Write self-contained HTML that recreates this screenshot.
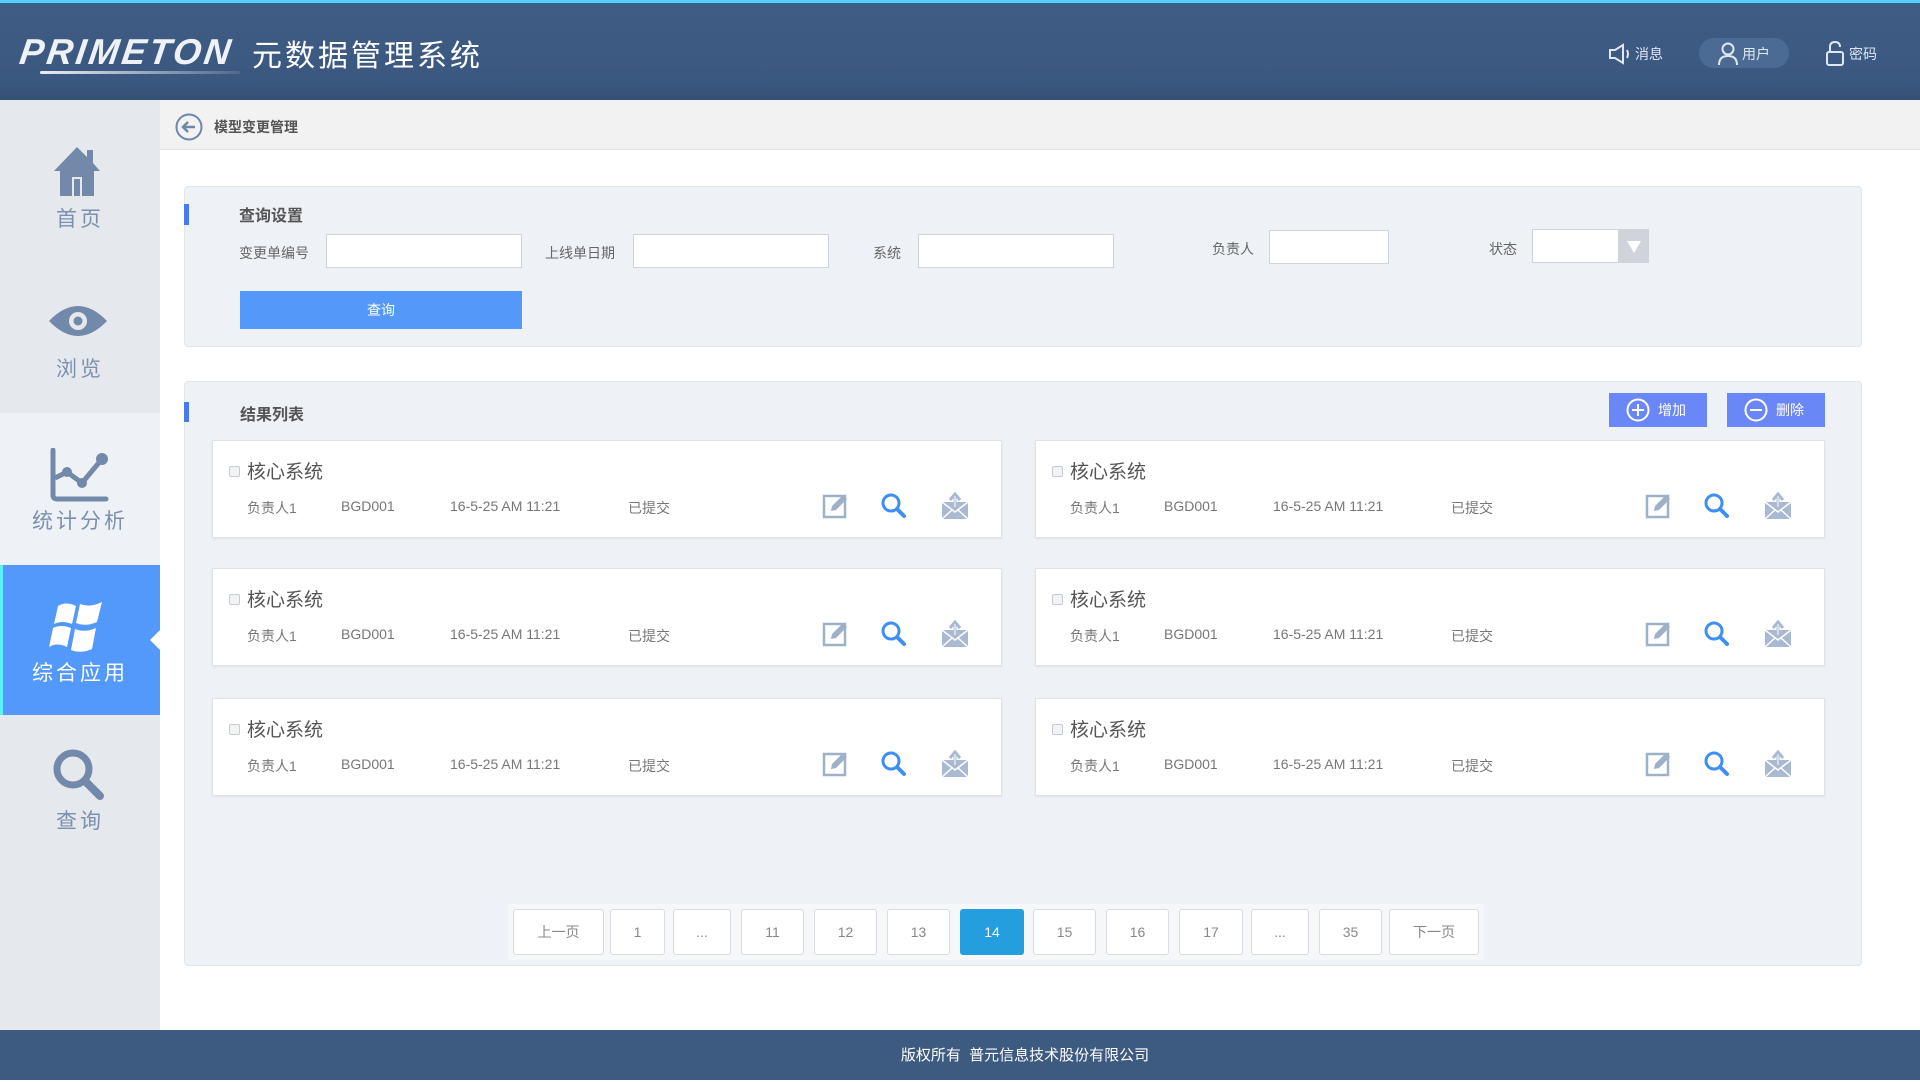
<!DOCTYPE html>
<html><head><meta charset="utf-8"><style>
*{margin:0;padding:0;box-sizing:border-box}
body{width:1920px;height:1080px;position:relative;overflow:hidden;background:#fff;font-family:"Liberation Sans","Noto Sans CJK SC",sans-serif;color:#555}
.a{position:absolute}
.hdr{left:0;top:0;width:1920px;height:100px;background:linear-gradient(#3f5c85,#3b5880 80%,#344f74);border-top:3px solid #52d2f6}
.side{left:0;top:100px;width:160px;height:930px;background:#e5e9ee}
.nav{left:0;width:160px;text-align:center;color:#7a90ae;font-size:21px;letter-spacing:3px}
.crumb{left:160px;top:100px;width:1760px;height:50px;background:#f2f2f2;border-bottom:1px solid #e3e3e3}
.panel{left:184px;width:1678px;background:#eef1f5;border:1px solid #e2e5e9;border-radius:4px}
.mark{left:184px;width:5px;background:#4a78f0}
.lbl{font-size:14px;color:#666;line-height:20px}
.inp{background:#fff;border:1px solid #cfd4da}
.card{width:790px;height:98px;background:#fff;border:1px solid #dfe2e7;box-shadow:0 1px 2px rgba(0,0,0,.06)}
.card .cb{left:16px;top:25px;width:11px;height:11px;border:1px solid #c8ccd2;background:#f2f3f5;border-radius:2px}
.card .t{left:34px;top:16px;font-size:19px;color:#555}
.card .r{top:57px;font-size:14px;color:#777}
.pg{top:909px;height:46px;background:#fff;border:1px solid #d8dce2;border-radius:3px;text-align:center;line-height:44px;font-size:14px;color:#888}
.btn2{top:393px;width:98px;height:34px;background:#6a87f7;color:#fff;font-size:14px;line-height:34px}
</style></head><body>
<div class="a hdr">
 <div class="a" style="left:20px;top:28px;font:italic bold 36px 'Liberation Sans',sans-serif;color:#eef2f7;letter-spacing:3px;transform:skewX(-8deg)">PRIMETON</div>
 <div class="a" style="left:40px;top:68px;width:200px;height:3px;border-radius:2px;background:linear-gradient(90deg,rgba(255,255,255,.9),rgba(255,255,255,.1))"></div>
 <div class="a" style="left:252px;top:28px;font-size:30px;color:#fff;letter-spacing:3px">元数据管理系统</div>
 <svg class="a" style="left:1608px;top:40px" width="24" height="22" viewBox="0 0 24 22"><path d="M2 7h5l8-5v18l-8-5H2z" fill="none" stroke="#dfe7f2" stroke-width="2"/><path d="M19 7q2 4 0 8" fill="none" stroke="#dfe7f2" stroke-width="2"/></svg>
 <div class="a" style="left:1635px;top:41px;font-size:14px;color:#dfe7f2">消息</div>
 <div class="a" style="left:1699px;top:35px;width:90px;height:30px;border-radius:15px;background:#4b6b95"></div>
 <svg class="a" style="left:1717px;top:39px" width="22" height="24" viewBox="0 0 22 24"><circle cx="11" cy="7" r="5.5" fill="none" stroke="#dfe7f2" stroke-width="2"/><path d="M2 23q0-9 9-9t9 9" fill="none" stroke="#dfe7f2" stroke-width="2"/></svg>
 <div class="a" style="left:1742px;top:41px;font-size:14px;color:#dfe7f2">用户</div>
 <svg class="a" style="left:1825px;top:38px" width="20" height="26" viewBox="0 0 20 26"><rect x="2" y="11" width="16" height="13" rx="2" fill="none" stroke="#dfe7f2" stroke-width="2"/><path d="M5 11V6q0-5 5-5t5 5" fill="none" stroke="#dfe7f2" stroke-width="2"/></svg>
 <div class="a" style="left:1849px;top:41px;font-size:14px;color:#dfe7f2">密码</div>
</div>

<div class="a side"></div>
<div class="a" style="left:0;top:413px;width:160px;height:152px;background:#eef2f6"></div>
<div class="a" style="left:0;top:565px;width:160px;height:150px;background:#5299fb;border-left:3px solid #5ff0f5"></div>
<div class="a" style="left:150px;top:630px;width:0;height:0;border-top:10px solid transparent;border-bottom:10px solid transparent;border-right:10px solid #fff"></div>

<svg class="a" style="left:52px;top:145px" width="50" height="52" viewBox="0 0 50 52"><path d="M25 2L2 26h6v25h12V32h10v19h12V26h6L41 18V5h-6v7z" fill="#7389a9"/><rect x="20" y="32" width="10" height="19" fill="#e5e9ee"/><rect x="22" y="34" width="6" height="17" fill="#7389a9"/></svg>
<div class="a nav" style="top:203px">首页</div>
<svg class="a" style="left:47px;top:302px" width="62" height="38" viewBox="0 0 62 38"><path d="M2 19Q31-11 60 19Q31 49 2 19z" fill="#7389a9"/><circle cx="31" cy="19" r="9" fill="#e5e9ee"/><circle cx="31" cy="19" r="4.5" fill="#7389a9"/></svg>
<div class="a nav" style="top:353px">浏览</div>
<svg class="a" style="left:48px;top:448px" width="62" height="54" viewBox="0 0 62 54"><path d="M5 2v45q0 4 4 4h49" fill="none" stroke="#7389a9" stroke-width="5" stroke-linecap="round"/><path d="M7 30l12-6 15 11 20-24" fill="none" stroke="#7389a9" stroke-width="5"/><circle cx="19" cy="24" r="5" fill="#7389a9"/><circle cx="34" cy="35" r="5" fill="#7389a9"/><circle cx="54" cy="11" r="6" fill="#7389a9"/></svg>
<div class="a nav" style="top:505px">统计分析</div>
<svg class="a" style="left:48px;top:600px" width="60" height="56" viewBox="0 0 60 56"><path d="M10 6q8-5 18 0l-4 18q-10-4-18 0z" fill="#fff"/><path d="M32 4q10 4 22-2l-5 20q-11 5-21 1z" fill="#fff"/><path d="M5 28q8-4 18 0l-4 19q-10-5-18 0z" fill="#fff"/><path d="M27 29q10 4 21-1l-4 21q-11 5-21 1z" fill="#fff"/></svg>
<div class="a nav" style="top:657px;color:#fff">综合应用</div>
<svg class="a" style="left:52px;top:748px" width="54" height="54" viewBox="0 0 54 54"><circle cx="21" cy="21" r="16" fill="none" stroke="#7389a9" stroke-width="7"/><path d="M33 33l15 15" stroke="#7389a9" stroke-width="8" stroke-linecap="round"/></svg>
<div class="a nav" style="top:805px">查询</div>

<div class="a crumb">
 <svg class="a" style="left:15px;top:13px" width="28" height="28" viewBox="0 0 28 28"><circle cx="14" cy="14" r="12.5" fill="none" stroke="#6d86ab" stroke-width="2"/><path d="M20 14H8M13 9l-5 5 5 5" fill="none" stroke="#6d86ab" stroke-width="2.5"/></svg>
 <div class="a" style="left:54px;top:17px;font-size:14px;font-weight:bold;color:#555">模型变更管理</div>
</div>

<div class="a panel" style="top:186px;height:161px"></div>
<div class="a mark" style="top:204px;height:21px"></div>
<div class="a" style="left:239px;top:202px;font-size:16px;font-weight:bold;color:#555">查询设置</div>
<div class="a lbl" style="left:239px;top:243px">变更单编号</div>
<div class="a inp" style="left:326px;top:234px;width:196px;height:34px"></div>
<div class="a lbl" style="left:545px;top:243px">上线单日期</div>
<div class="a inp" style="left:633px;top:234px;width:196px;height:34px"></div>
<div class="a lbl" style="left:873px;top:243px">系统</div>
<div class="a inp" style="left:918px;top:234px;width:196px;height:34px"></div>
<div class="a lbl" style="left:1212px;top:239px">负责人</div>
<div class="a inp" style="left:1269px;top:230px;width:120px;height:34px"></div>
<div class="a lbl" style="left:1489px;top:239px">状态</div>
<div class="a inp" style="left:1532px;top:229px;width:117px;height:34px;background:#fff"></div>
<div class="a" style="left:1618px;top:229px;width:31px;height:34px;background:#d0d4da"></div>
<div class="a" style="left:1627px;top:241px;width:0;height:0;border-left:7px solid transparent;border-right:7px solid transparent;border-top:12px solid #fff"></div>
<div class="a" style="left:240px;top:291px;width:282px;height:38px;background:#5499fa;color:#fff;font-size:14px;text-align:center;line-height:38px">查询</div>

<div class="a panel" style="top:381px;height:585px"></div>
<div class="a mark" style="top:402px;height:20px"></div>
<div class="a" style="left:240px;top:401px;font-size:16px;font-weight:bold;color:#555">结果列表</div>
<div class="a btn2" style="left:1609px"><svg class="a" style="left:17px;top:5px" width="24" height="24" viewBox="0 0 24 24"><circle cx="12" cy="12" r="10.5" fill="none" stroke="#fff" stroke-width="2"/><path d="M12 6v12M6 12h12" stroke="#fff" stroke-width="2"/></svg><span class="a" style="left:49px">增加</span></div>
<div class="a btn2" style="left:1727px"><svg class="a" style="left:17px;top:5px" width="24" height="24" viewBox="0 0 24 24"><circle cx="12" cy="12" r="10.5" fill="none" stroke="#fff" stroke-width="2"/><path d="M6 12h12" stroke="#fff" stroke-width="2"/></svg><span class="a" style="left:49px">删除</span></div>

<div class="a card" style="left:212px;top:440px"><div class="a cb"></div><div class="a t">核心系统</div><div class="a r" style="left:34px">负责人1</div><div class="a r" style="left:128px">BGD001</div><div class="a r" style="left:237px">16-5-25 AM 11:21</div><div class="a r" style="left:415px">已提交</div>
<svg class="a" style="left:609px;top:51px" width="150" height="28" viewBox="0 0 150 28"><rect x="2" y="4" width="21" height="21" fill="none" stroke="#9fb0c9" stroke-width="2.5"/><path d="M9 19l1-5L21 3l4 4-11 11z" fill="#9fb0c9"/><circle cx="69" cy="11" r="8" fill="none" stroke="#3f8ef3" stroke-width="3"/><path d="M75 17l7 7" stroke="#3f8ef3" stroke-width="4" stroke-linecap="round"/><path d="M120 10h26v17h-26z" fill="#a9b9d2"/><path d="M120 10l13 10 13-10M120 27l10-9M146 27l-10-9" fill="none" stroke="#fff" stroke-width="1.5"/><path d="M133 17V3M128 8l5-6 5 6" fill="none" stroke="#a9b9d2" stroke-width="3"/><path d="M133 15V4" stroke="#fff" stroke-width="1"/></svg></div>
<div class="a card" style="left:1035px;top:440px"><div class="a cb"></div><div class="a t">核心系统</div><div class="a r" style="left:34px">负责人1</div><div class="a r" style="left:128px">BGD001</div><div class="a r" style="left:237px">16-5-25 AM 11:21</div><div class="a r" style="left:415px">已提交</div>
<svg class="a" style="left:609px;top:51px" width="150" height="28" viewBox="0 0 150 28"><rect x="2" y="4" width="21" height="21" fill="none" stroke="#9fb0c9" stroke-width="2.5"/><path d="M9 19l1-5L21 3l4 4-11 11z" fill="#9fb0c9"/><circle cx="69" cy="11" r="8" fill="none" stroke="#3f8ef3" stroke-width="3"/><path d="M75 17l7 7" stroke="#3f8ef3" stroke-width="4" stroke-linecap="round"/><path d="M120 10h26v17h-26z" fill="#a9b9d2"/><path d="M120 10l13 10 13-10M120 27l10-9M146 27l-10-9" fill="none" stroke="#fff" stroke-width="1.5"/><path d="M133 17V3M128 8l5-6 5 6" fill="none" stroke="#a9b9d2" stroke-width="3"/><path d="M133 15V4" stroke="#fff" stroke-width="1"/></svg></div>
<div class="a card" style="left:212px;top:568px"><div class="a cb"></div><div class="a t">核心系统</div><div class="a r" style="left:34px">负责人1</div><div class="a r" style="left:128px">BGD001</div><div class="a r" style="left:237px">16-5-25 AM 11:21</div><div class="a r" style="left:415px">已提交</div>
<svg class="a" style="left:609px;top:51px" width="150" height="28" viewBox="0 0 150 28"><rect x="2" y="4" width="21" height="21" fill="none" stroke="#9fb0c9" stroke-width="2.5"/><path d="M9 19l1-5L21 3l4 4-11 11z" fill="#9fb0c9"/><circle cx="69" cy="11" r="8" fill="none" stroke="#3f8ef3" stroke-width="3"/><path d="M75 17l7 7" stroke="#3f8ef3" stroke-width="4" stroke-linecap="round"/><path d="M120 10h26v17h-26z" fill="#a9b9d2"/><path d="M120 10l13 10 13-10M120 27l10-9M146 27l-10-9" fill="none" stroke="#fff" stroke-width="1.5"/><path d="M133 17V3M128 8l5-6 5 6" fill="none" stroke="#a9b9d2" stroke-width="3"/><path d="M133 15V4" stroke="#fff" stroke-width="1"/></svg></div>
<div class="a card" style="left:1035px;top:568px"><div class="a cb"></div><div class="a t">核心系统</div><div class="a r" style="left:34px">负责人1</div><div class="a r" style="left:128px">BGD001</div><div class="a r" style="left:237px">16-5-25 AM 11:21</div><div class="a r" style="left:415px">已提交</div>
<svg class="a" style="left:609px;top:51px" width="150" height="28" viewBox="0 0 150 28"><rect x="2" y="4" width="21" height="21" fill="none" stroke="#9fb0c9" stroke-width="2.5"/><path d="M9 19l1-5L21 3l4 4-11 11z" fill="#9fb0c9"/><circle cx="69" cy="11" r="8" fill="none" stroke="#3f8ef3" stroke-width="3"/><path d="M75 17l7 7" stroke="#3f8ef3" stroke-width="4" stroke-linecap="round"/><path d="M120 10h26v17h-26z" fill="#a9b9d2"/><path d="M120 10l13 10 13-10M120 27l10-9M146 27l-10-9" fill="none" stroke="#fff" stroke-width="1.5"/><path d="M133 17V3M128 8l5-6 5 6" fill="none" stroke="#a9b9d2" stroke-width="3"/><path d="M133 15V4" stroke="#fff" stroke-width="1"/></svg></div>
<div class="a card" style="left:212px;top:698px"><div class="a cb"></div><div class="a t">核心系统</div><div class="a r" style="left:34px">负责人1</div><div class="a r" style="left:128px">BGD001</div><div class="a r" style="left:237px">16-5-25 AM 11:21</div><div class="a r" style="left:415px">已提交</div>
<svg class="a" style="left:609px;top:51px" width="150" height="28" viewBox="0 0 150 28"><rect x="2" y="4" width="21" height="21" fill="none" stroke="#9fb0c9" stroke-width="2.5"/><path d="M9 19l1-5L21 3l4 4-11 11z" fill="#9fb0c9"/><circle cx="69" cy="11" r="8" fill="none" stroke="#3f8ef3" stroke-width="3"/><path d="M75 17l7 7" stroke="#3f8ef3" stroke-width="4" stroke-linecap="round"/><path d="M120 10h26v17h-26z" fill="#a9b9d2"/><path d="M120 10l13 10 13-10M120 27l10-9M146 27l-10-9" fill="none" stroke="#fff" stroke-width="1.5"/><path d="M133 17V3M128 8l5-6 5 6" fill="none" stroke="#a9b9d2" stroke-width="3"/><path d="M133 15V4" stroke="#fff" stroke-width="1"/></svg></div>
<div class="a card" style="left:1035px;top:698px"><div class="a cb"></div><div class="a t">核心系统</div><div class="a r" style="left:34px">负责人1</div><div class="a r" style="left:128px">BGD001</div><div class="a r" style="left:237px">16-5-25 AM 11:21</div><div class="a r" style="left:415px">已提交</div>
<svg class="a" style="left:609px;top:51px" width="150" height="28" viewBox="0 0 150 28"><rect x="2" y="4" width="21" height="21" fill="none" stroke="#9fb0c9" stroke-width="2.5"/><path d="M9 19l1-5L21 3l4 4-11 11z" fill="#9fb0c9"/><circle cx="69" cy="11" r="8" fill="none" stroke="#3f8ef3" stroke-width="3"/><path d="M75 17l7 7" stroke="#3f8ef3" stroke-width="4" stroke-linecap="round"/><path d="M120 10h26v17h-26z" fill="#a9b9d2"/><path d="M120 10l13 10 13-10M120 27l10-9M146 27l-10-9" fill="none" stroke="#fff" stroke-width="1.5"/><path d="M133 17V3M128 8l5-6 5 6" fill="none" stroke="#a9b9d2" stroke-width="3"/><path d="M133 15V4" stroke="#fff" stroke-width="1"/></svg></div>

<div class="a" style="left:508px;top:904px;width:976px;height:56px;background:#f5f7f9"></div>
<div class="a pg" style="left:513px;width:91px">上一页</div>
<div class="a pg" style="left:610px;width:55px">1</div>
<div class="a pg" style="left:673px;width:58px">...</div>
<div class="a pg" style="left:741px;width:63px">11</div>
<div class="a pg" style="left:814px;width:63px">12</div>
<div class="a pg" style="left:887px;width:63px">13</div>
<div class="a pg" style="left:960px;width:64px;background:#259edf;border-color:#259edf;color:#fff">14</div>
<div class="a pg" style="left:1033px;width:63px">15</div>
<div class="a pg" style="left:1106px;width:63px">16</div>
<div class="a pg" style="left:1179px;width:64px">17</div>
<div class="a pg" style="left:1251px;width:58px">...</div>
<div class="a pg" style="left:1319px;width:63px">35</div>
<div class="a pg" style="left:1389px;width:90px">下一页</div>

<div class="a" style="left:0;top:1030px;width:1920px;height:50px;background:#3d5a80;color:#fff;font-size:15px;text-align:center;line-height:52px;padding-left:130px">版权所有&nbsp;&nbsp;普元信息技术股份有限公司</div>
</body></html>
